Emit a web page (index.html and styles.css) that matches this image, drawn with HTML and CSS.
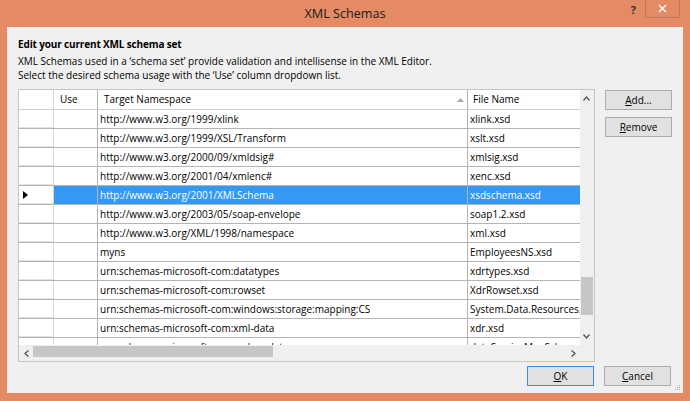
FILE: index.html
```html
<!DOCTYPE html>
<html>
<head>
<meta charset="utf-8">
<link rel="stylesheet" href="styles.css">
</head>
<body>
<div class="window">
  <div class="titlebar">
    <span class="title">XML Schemas</span>
    <div class="controls">
      <span class="help">?</span>
      <span class="close">
        <svg width="9" height="9" viewBox="0 0 9 9"><path d="M1 1L8 8M8 1L1 8" stroke="#fff" stroke-width="1.4"/></svg>
      </span>
    </div>
  </div>
  <div class="client">
    <div class="heading">Edit your current XML schema set</div>
    <div class="desc">
      <div>XML Schemas used in a ‘schema set’ provide validation and intellisense in the XML Editor.</div>
      <div>Select the desired schema usage with the ‘Use’ column dropdown list.</div>
    </div>
    <div class="main">
      <div class="grid">
        <div class="viewport">
          <div class="row head">
            <div class="c rh"></div>
            <div class="c use">Use</div>
            <div class="c ns">Target Namespace<svg class="sort" width="7" height="4" viewBox="0 0 7 4"><path d="M0 4L3.5 0L7 4Z" fill="#a8a8a8"/></svg></div>
            <div class="c file">File Name</div>
          </div>
          <div class="row"><div class="c rh"></div><div class="c use"></div><div class="c ns">http://www.w3.org/1999/xlink</div><div class="c file">xlink.xsd</div></div>
          <div class="row"><div class="c rh"></div><div class="c use"></div><div class="c ns">http://www.w3.org/1999/XSL/Transform</div><div class="c file">xslt.xsd</div></div>
          <div class="row"><div class="c rh"></div><div class="c use"></div><div class="c ns">http://www.w3.org/2000/09/xmldsig#</div><div class="c file">xmlsig.xsd</div></div>
          <div class="row"><div class="c rh"></div><div class="c use"></div><div class="c ns">http://www.w3.org/2001/04/xmlenc#</div><div class="c file">xenc.xsd</div></div>
          <div class="row sel"><div class="c rh"><svg width="5" height="8" viewBox="0 0 5 8"><path d="M0 0L5 4L0 8Z" fill="#000"/></svg></div><div class="c use"></div><div class="c ns">http://www.w3.org/2001/XMLSchema</div><div class="c file">xsdschema.xsd</div></div>
          <div class="row"><div class="c rh"></div><div class="c use"></div><div class="c ns">http://www.w3.org/2003/05/soap-envelope</div><div class="c file">soap1.2.xsd</div></div>
          <div class="row"><div class="c rh"></div><div class="c use"></div><div class="c ns">http://www.w3.org/XML/1998/namespace</div><div class="c file">xml.xsd</div></div>
          <div class="row"><div class="c rh"></div><div class="c use"></div><div class="c ns">myns</div><div class="c file">EmployeesNS.xsd</div></div>
          <div class="row"><div class="c rh"></div><div class="c use"></div><div class="c ns">urn:schemas-microsoft-com:datatypes</div><div class="c file">xdrtypes.xsd</div></div>
          <div class="row"><div class="c rh"></div><div class="c use"></div><div class="c ns">urn:schemas-microsoft-com:rowset</div><div class="c file">XdrRowset.xsd</div></div>
          <div class="row"><div class="c rh"></div><div class="c use"></div><div class="c ns">urn:schemas-microsoft-com:windows:storage:mapping:CS</div><div class="c file">System.Data.Resources.CSMSL.xsd</div></div>
          <div class="row"><div class="c rh"></div><div class="c use"></div><div class="c ns">urn:schemas-microsoft-com:xml-data</div><div class="c file">xdr.xsd</div></div>
          <div class="row"><div class="c rh"></div><div class="c use"></div><div class="c ns">urn:schemas-microsoft-com:xml-msdatasource</div><div class="c file">dataServiceMapSchema.xsd</div></div>
        </div>
        <div class="vscroll">
          <div class="arrow"><svg width="7" height="5" viewBox="0 0 7 5"><polyline points="0.5,4.5 3.5,1 6.5,4.5" fill="none" stroke="#555" stroke-width="1.3"/></svg></div>
          <div class="vtrack"><div class="vthumb"></div></div>
          <div class="arrow"><svg width="7" height="5" viewBox="0 0 7 5"><polyline points="0.5,0.5 3.5,4 6.5,0.5" fill="none" stroke="#555" stroke-width="1.3"/></svg></div>
        </div>
        <div class="hscroll">
          <div class="harrow"><svg width="5" height="7" viewBox="0 0 5 7"><polyline points="4.5,0.5 1,3.5 4.5,6.5" fill="none" stroke="#555" stroke-width="1.3"/></svg></div>
          <div class="htrack"><div class="hthumb"></div></div>
          <div class="harrow"><svg width="5" height="7" viewBox="0 0 5 7"><polyline points="0.5,0.5 4,3.5 0.5,6.5" fill="none" stroke="#555" stroke-width="1.3"/></svg></div>
        </div>
        <div class="corner"></div>
      </div>
      <div class="side">
        <button class="btn"><u>A</u>dd...</button>
        <button class="btn"><u>R</u>emove</button>
      </div>
    </div>
    <div class="footer">
      <button class="btn default"><u>O</u>K</button>
      <button class="btn"><u>C</u>ancel</button>
    </div>
    <svg class="grip" width="6" height="6" viewBox="0 0 6 6"><rect x="4" y="0" width="1" height="1" fill="#aaa"/><rect x="2" y="2" width="1" height="1" fill="#aaa"/><rect x="4" y="2" width="1" height="1" fill="#aaa"/><rect x="0" y="4" width="1" height="1" fill="#aaa"/><rect x="2" y="4" width="1" height="1" fill="#aaa"/><rect x="4" y="4" width="1" height="1" fill="#aaa"/></svg>
  </div>
</div>
</body>
</html>
```
FILE: styles.css
```css
* { box-sizing: border-box; }
body {
  margin: 0;
  background: #e48a64;
  font-family: "Open Sans", "Noto Sans", sans-serif;
  font-size: 10px;
  color: #000;
}
.window {
  width: 690px;
  height: 401px;
  display: flex;
  flex-direction: column;
}
.titlebar {
  height: 27px;
  position: relative;
  display: flex;
  align-items: center;
  justify-content: center;
}
.title {
  font-size: 12.6px;
  color: #1a1a1a;
  margin-top: -1px;
}
.controls {
  position: absolute;
  right: 10px;
  top: 0;
  display: flex;
  align-items: flex-start;
}
.help {
  font-size: 11px;
  font-weight: bold;
  color: #333;
  margin-top: 2px;
  margin-right: 9px;
}
.close {
  width: 35px;
  height: 18px;
  border: 1px solid #b97a5e;
  border-top: none;
  display: flex;
  align-items: center;
  justify-content: center;
}
.client {
  position: relative;
  margin: 0 7px;
  height: 366px;
  background: #f0f0f0;
  padding: 10px 11px 7px;
  display: flex;
  flex-direction: column;
}
.heading {
  font-weight: bold;
  line-height: 15px;
  height: 15px;
  letter-spacing: -0.15px;
}
.desc {
  margin-top: 2px;
  line-height: 14px;
}
.main {
  margin-top: 7px;
  display: flex;
  gap: 10px;
}
.grid {
  width: 577px;
  height: 273px;
  border: 1px solid #c6c6c6;
  display: grid;
  grid-template-columns: 561px 14px;
  grid-template-rows: 255px 16px;
  background: #f0f0f0;
}
.viewport {
  overflow: hidden;
  background: #fff;
}
.row {
  display: grid;
  grid-template-columns: 35px 44px 370px 140px;
  height: 19px;
  border-bottom: 1px solid #b4b4b4;
  line-height: 18px;
  white-space: nowrap;
}
.row.head {
  height: 20px;
  line-height: 19px;
  border-bottom-color: #cfcfcf;
}
.c {
  overflow: hidden;
  padding-left: 2px;
}
.rh {
  border-right: 1px solid #d8d8d8;
  display: flex;
  align-items: center;
  padding-left: 4px;
}
.use { border-right: 1px solid #b4b4b4; }
.ns { border-right: 1px solid #b4b4b4; }
.head .c { padding-left: 6px; }
.head .file { padding-left: 5px; }
.head .ns { position: relative; }
.sort { position: absolute; left: 359px; top: 8px; }
.row:not(.head) .rh { background: #fff; box-shadow: inset 0 -1px 0 #e2e2e2; }
.sel .use, .sel .ns, .sel .file { background: #3399f3; color: #fff; }
.vscroll {
  display: flex;
  flex-direction: column;
}
.arrow {
  height: 17px;
  display: flex;
  align-items: center;
  justify-content: center;
  padding-right: 1px;
}
.vtrack { flex: 1; }
.vthumb {
  margin-top: 170px;
  margin-left: 1px;
  width: 12px;
  height: 38px;
  background: #c6c6c6;
}
.hscroll {
  display: flex;
}
.harrow {
  width: 14px;
  display: flex;
  align-items: center;
  justify-content: center;
}
.htrack { flex: 1; }
.hthumb {
  margin-top: 1px;
  width: 240px;
  height: 11px;
  background: #c6c6c6;
}
.corner { background: #f0f0f0; }
.side {
  display: flex;
  flex-direction: column;
  gap: 7px;
  padding-top: 1px;
}
.btn {
  width: 67px;
  height: 20px;
  padding: 0;
  border: 1px solid #adadad;
  background: #e1e1e1;
  font-family: "Open Sans", "Noto Sans", sans-serif;
  font-size: 10px;
  color: #000;
  line-height: 17px;
}
.btn.default { border-color: #3c8fe0; }
.footer {
  margin-top: 4px;
  display: flex;
  justify-content: flex-end;
  gap: 10px;
  padding-right: 1px;
}
.grip {
  position: absolute;
  right: 2px;
  bottom: 2px;
}
```
